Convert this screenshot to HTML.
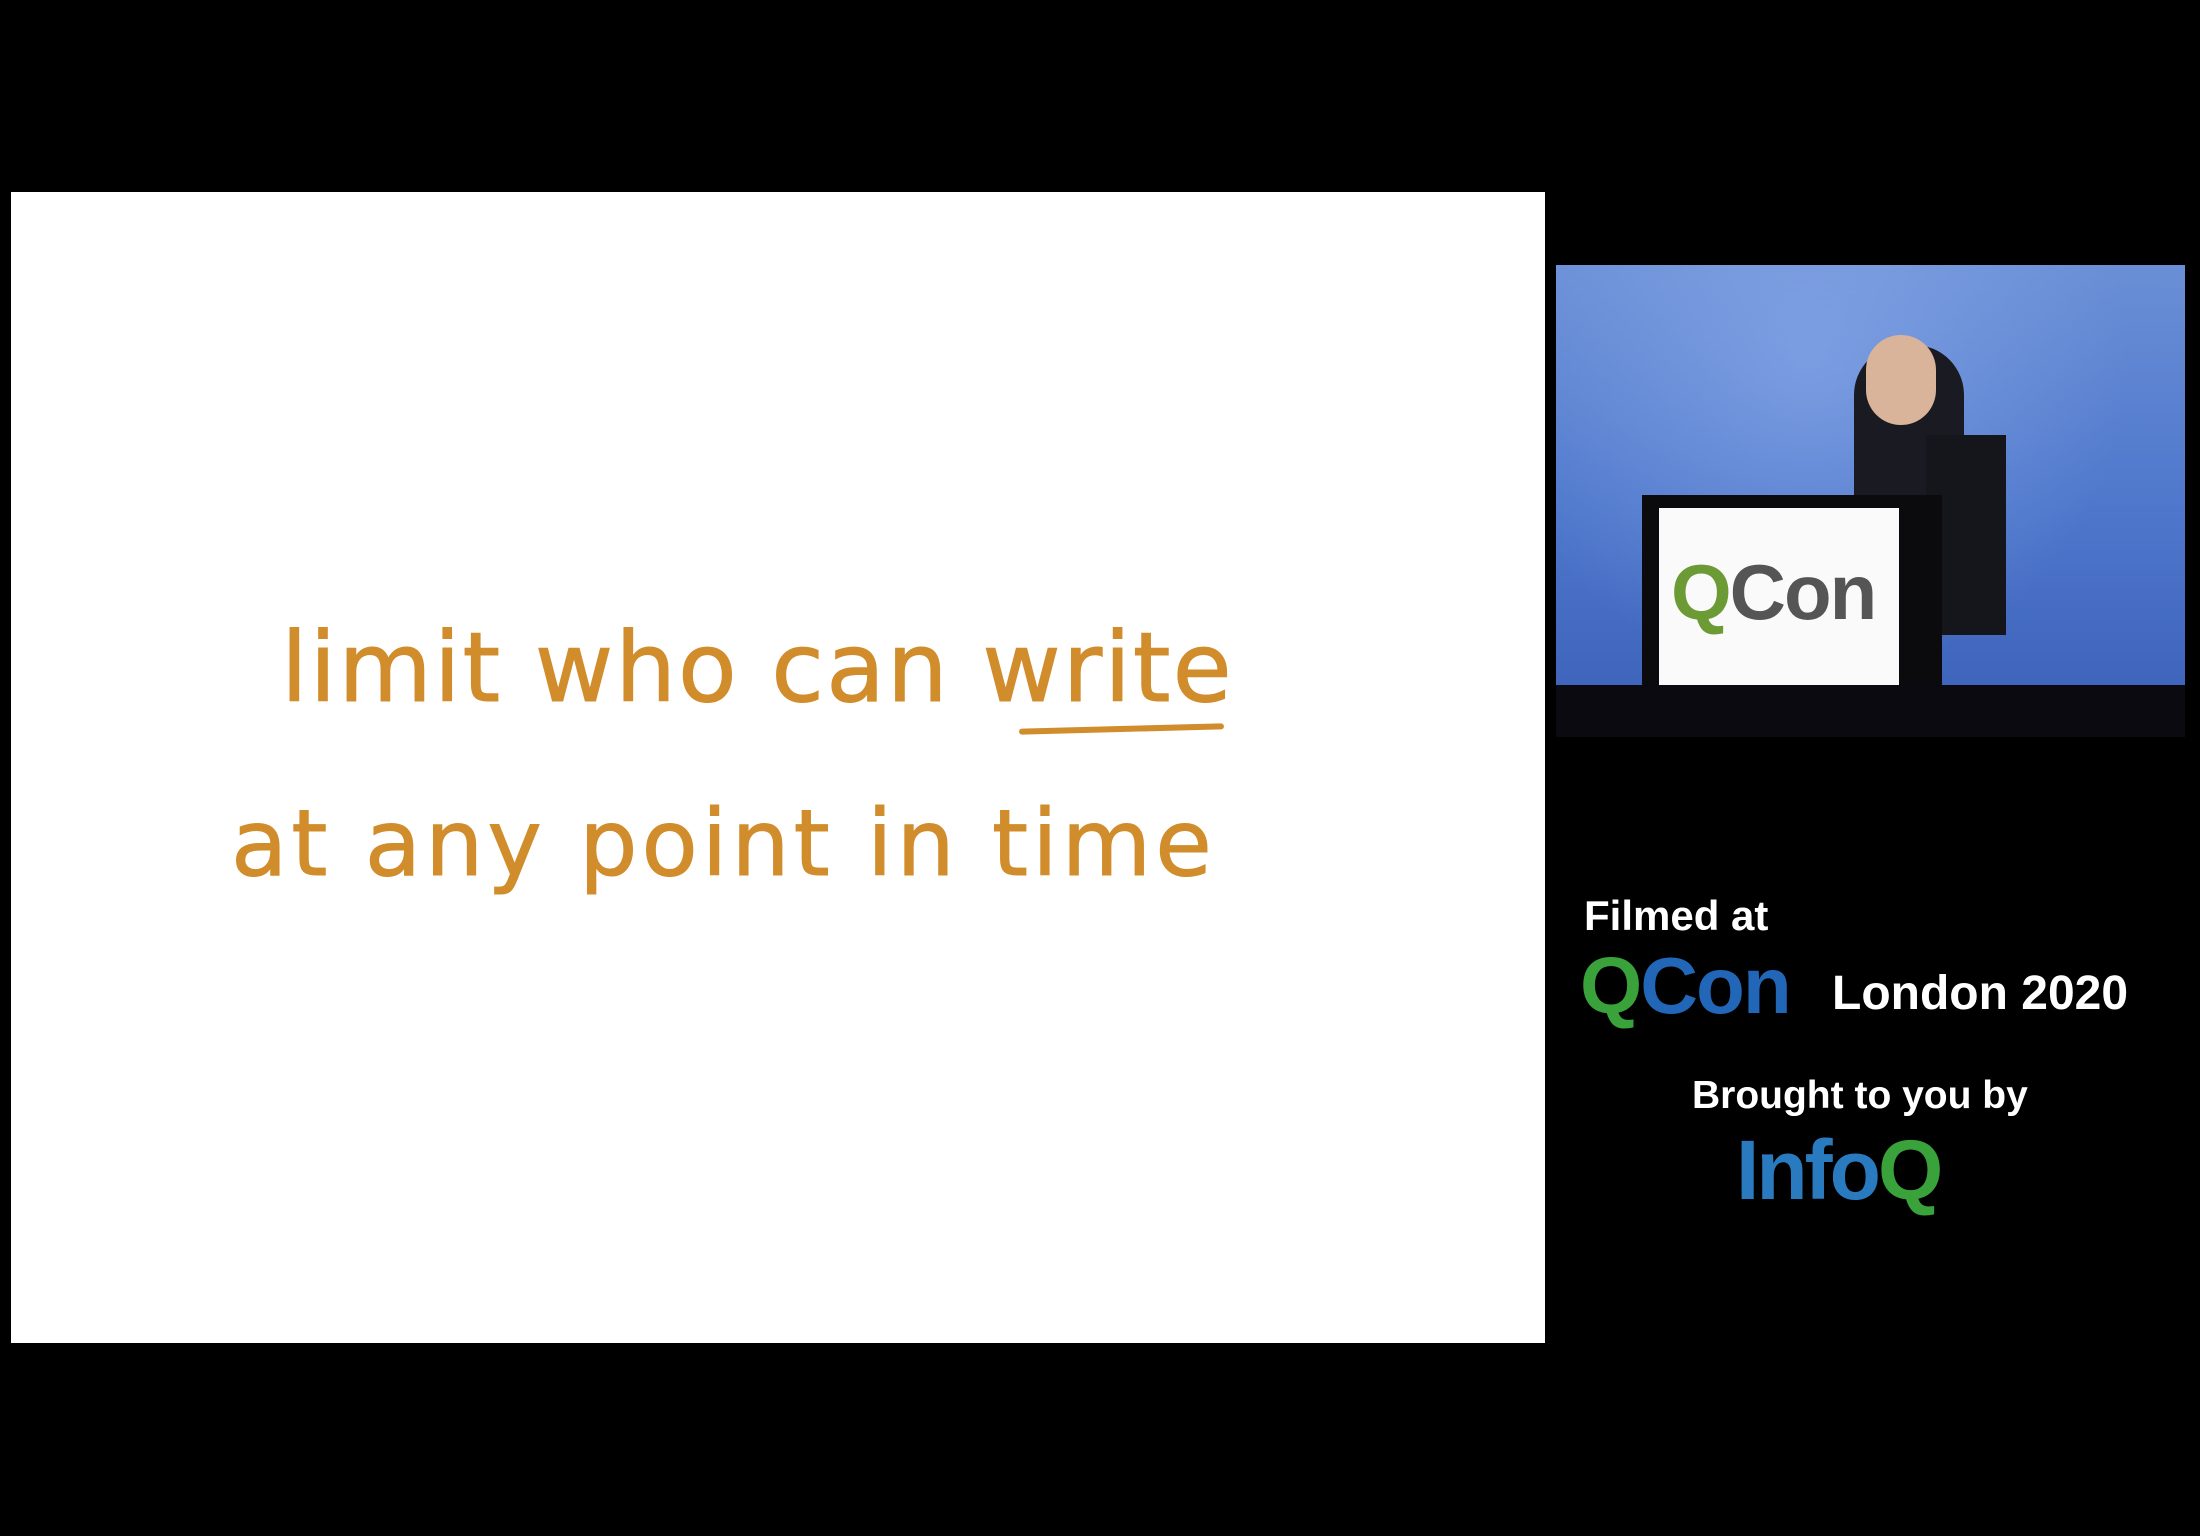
<!DOCTYPE html>
<html><head><meta charset="utf-8"><style>
body{margin:0;width:2200px;height:1536px;background:#000;position:relative;overflow:hidden;font-family:"Liberation Sans",sans-serif}
.slide{position:absolute;left:11px;top:192px;width:1534px;height:1151px;background:#fff}
.hw{position:absolute;color:#d18c2c;font-family:"DejaVu Sans",sans-serif;font-weight:normal;-webkit-text-stroke:1px #d18c2c;font-size:92px;white-space:nowrap}
.vid{position:absolute;left:1556px;top:265px;width:629px;height:472px;background:linear-gradient(180deg,#6a8fd6 0%,#4f78cc 50%,#3a5fb8 100%);overflow:hidden}
.w{position:absolute;color:#fff;font-weight:bold;white-space:nowrap}
</style></head><body>
<div class="slide">
 <div class="hw" style="left:270px;top:420px;font-size:96px;letter-spacing:2px">limit who can write</div>
 <div style="position:absolute;left:1008px;top:534px;width:205px;height:6px;background:#d18c2c;border-radius:3px;transform:rotate(-1.5deg)"></div>
 <div class="hw" style="left:220px;top:598px;letter-spacing:4px">at any point in time</div>
</div>
<div class="vid">
 <div style="position:absolute;left:0;top:0;width:629px;height:472px;background:radial-gradient(ellipse at 40% 20%,rgba(150,180,240,.5),rgba(0,0,0,0) 60%)"></div>
 <div style="position:absolute;left:298px;top:80px;width:110px;height:200px;border-radius:50px 50px 10px 10px;background:#1a1a22"></div>
 <div style="position:absolute;left:310px;top:70px;width:70px;height:90px;border-radius:40px;background:#d9b49a"></div>
 <div style="position:absolute;left:370px;top:170px;width:80px;height:200px;background:#15151c"></div>
 <div style="position:absolute;left:86px;top:230px;width:300px;height:242px;background:#0b0b0e"></div>
 <div style="position:absolute;left:103px;top:243px;width:240px;height:180px;background:#fafafa"></div>
 <div style="position:absolute;left:115px;top:282px;font-size:78px;font-weight:bold;letter-spacing:-2px"><span style="color:#6c9b35">Q</span><span style="color:#555">Con</span></div>
 <div style="position:absolute;left:0;top:420px;width:629px;height:52px;background:#0a0a10"></div>
</div>
<div class="w" style="left:1584px;top:892px;font-size:42px">Filmed at</div>
<div class="w" style="left:1580px;top:940px;font-size:80px;letter-spacing:-2px"><span style="color:#3aa23a">Q</span><span style="color:#2266b8">Con</span></div>
<div class="w" style="left:1832px;top:966px;font-size:48px">London 2020</div>
<div class="w" style="left:1692px;top:1074px;font-size:39px">Brought to you by</div>
<div class="w" style="left:1736px;top:1122px;font-size:84px;letter-spacing:-3px"><span style="color:#2a7ac0">Info</span><span style="color:#3aa23a">Q</span></div>
</body></html>
